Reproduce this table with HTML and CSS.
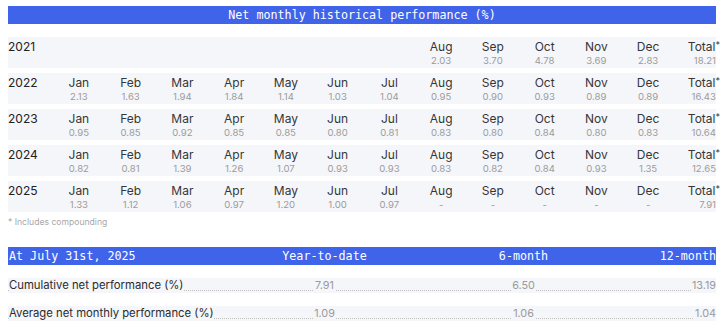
FILE: index.html
```html
<!DOCTYPE html>
<html lang="en">
<head>
<meta charset="utf-8">
<title>Net monthly historical performance</title>
<link rel="stylesheet" href="styles.css">
</head>
<body>
<div class="page">
  <div class="bar bar-title">Net monthly historical performance (%)</div>

  <div class="perf">
    <div class="row">
      <div class="year">2021</div>
      <div class="cell"></div><div class="cell"></div><div class="cell"></div><div class="cell"></div><div class="cell"></div><div class="cell"></div><div class="cell"></div>
      <div class="cell"><span class="m">Aug</span><span class="v">2.03</span></div>
      <div class="cell"><span class="m">Sep</span><span class="v">3.70</span></div>
      <div class="cell"><span class="m">Oct</span><span class="v">4.78</span></div>
      <div class="cell"><span class="m">Nov</span><span class="v">3.69</span></div>
      <div class="cell"><span class="m">Dec</span><span class="v">2.83</span></div>
      <div class="cell total"><span class="m">Total<span class="ast">*</span></span><span class="v">18.21</span></div>
    </div>
    <div class="row">
      <div class="year">2022</div>
      <div class="cell"><span class="m">Jan</span><span class="v">2.13</span></div>
      <div class="cell"><span class="m">Feb</span><span class="v">1.63</span></div>
      <div class="cell"><span class="m">Mar</span><span class="v">1.94</span></div>
      <div class="cell"><span class="m">Apr</span><span class="v">1.84</span></div>
      <div class="cell"><span class="m">May</span><span class="v">1.14</span></div>
      <div class="cell"><span class="m">Jun</span><span class="v">1.03</span></div>
      <div class="cell"><span class="m">Jul</span><span class="v">1.04</span></div>
      <div class="cell"><span class="m">Aug</span><span class="v">0.95</span></div>
      <div class="cell"><span class="m">Sep</span><span class="v">0.90</span></div>
      <div class="cell"><span class="m">Oct</span><span class="v">0.93</span></div>
      <div class="cell"><span class="m">Nov</span><span class="v">0.89</span></div>
      <div class="cell"><span class="m">Dec</span><span class="v">0.89</span></div>
      <div class="cell total"><span class="m">Total<span class="ast">*</span></span><span class="v">16.43</span></div>
    </div>
    <div class="row">
      <div class="year">2023</div>
      <div class="cell"><span class="m">Jan</span><span class="v">0.95</span></div>
      <div class="cell"><span class="m">Feb</span><span class="v">0.85</span></div>
      <div class="cell"><span class="m">Mar</span><span class="v">0.92</span></div>
      <div class="cell"><span class="m">Apr</span><span class="v">0.85</span></div>
      <div class="cell"><span class="m">May</span><span class="v">0.85</span></div>
      <div class="cell"><span class="m">Jun</span><span class="v">0.80</span></div>
      <div class="cell"><span class="m">Jul</span><span class="v">0.81</span></div>
      <div class="cell"><span class="m">Aug</span><span class="v">0.83</span></div>
      <div class="cell"><span class="m">Sep</span><span class="v">0.80</span></div>
      <div class="cell"><span class="m">Oct</span><span class="v">0.84</span></div>
      <div class="cell"><span class="m">Nov</span><span class="v">0.80</span></div>
      <div class="cell"><span class="m">Dec</span><span class="v">0.83</span></div>
      <div class="cell total"><span class="m">Total<span class="ast">*</span></span><span class="v">10.64</span></div>
    </div>
    <div class="row">
      <div class="year">2024</div>
      <div class="cell"><span class="m">Jan</span><span class="v">0.82</span></div>
      <div class="cell"><span class="m">Feb</span><span class="v">0.81</span></div>
      <div class="cell"><span class="m">Mar</span><span class="v">1.39</span></div>
      <div class="cell"><span class="m">Apr</span><span class="v">1.26</span></div>
      <div class="cell"><span class="m">May</span><span class="v">1.07</span></div>
      <div class="cell"><span class="m">Jun</span><span class="v">0.93</span></div>
      <div class="cell"><span class="m">Jul</span><span class="v">0.93</span></div>
      <div class="cell"><span class="m">Aug</span><span class="v">0.83</span></div>
      <div class="cell"><span class="m">Sep</span><span class="v">0.82</span></div>
      <div class="cell"><span class="m">Oct</span><span class="v">0.84</span></div>
      <div class="cell"><span class="m">Nov</span><span class="v">0.93</span></div>
      <div class="cell"><span class="m">Dec</span><span class="v">1.35</span></div>
      <div class="cell total"><span class="m">Total<span class="ast">*</span></span><span class="v">12.65</span></div>
    </div>
    <div class="row">
      <div class="year">2025</div>
      <div class="cell"><span class="m">Jan</span><span class="v">1.33</span></div>
      <div class="cell"><span class="m">Feb</span><span class="v">1.12</span></div>
      <div class="cell"><span class="m">Mar</span><span class="v">1.06</span></div>
      <div class="cell"><span class="m">Apr</span><span class="v">0.97</span></div>
      <div class="cell"><span class="m">May</span><span class="v">1.20</span></div>
      <div class="cell"><span class="m">Jun</span><span class="v">1.00</span></div>
      <div class="cell"><span class="m">Jul</span><span class="v">0.97</span></div>
      <div class="cell"><span class="m">Aug</span><span class="v">-</span></div>
      <div class="cell"><span class="m">Sep</span><span class="v">-</span></div>
      <div class="cell"><span class="m">Oct</span><span class="v">-</span></div>
      <div class="cell"><span class="m">Nov</span><span class="v">-</span></div>
      <div class="cell"><span class="m">Dec</span><span class="v">-</span></div>
      <div class="cell total"><span class="m">Total<span class="ast">*</span></span><span class="v">7.91</span></div>
    </div>
  </div>

  <div class="note">* Includes compounding</div>

  <div class="bar summary-grid">
    <div class="sh-label">At July 31st, 2025</div>
    <div class="sh-mid">Year-to-date</div>
    <div class="sh-mid">6-month</div>
    <div class="sh-end">12-month</div>
  </div>

  <div class="summary">
    <div class="srow summary-grid">
      <div class="s-label"><span class="mask">Cumulative net performance (%)</span></div>
      <div class="s-mid"><span class="mask val">7.91</span></div>
      <div class="s-mid"><span class="mask val">6.50</span></div>
      <div class="s-end"><span class="mask val">13.19</span></div>
    </div>
    <div class="srow summary-grid">
      <div class="s-label"><span class="mask">Average net monthly performance (%)</span></div>
      <div class="s-mid"><span class="mask val">1.09</span></div>
      <div class="s-mid"><span class="mask val">1.06</span></div>
      <div class="s-end"><span class="mask val">1.04</span></div>
    </div>
  </div>
</div>
</body>
</html>
```

FILE: styles.css
```css
* { box-sizing: border-box; }

html, body {
  margin: 0;
  padding: 0;
  background: #ffffff;
}

body {
  font-family: Inter, "Noto Sans", "Liberation Sans", sans-serif;
  color: #2b2b2b;
}

.page {
  width: 726px;
  padding: 6px 10px 0 8px;
}

.bar {
  height: 18px;
  background: #4064e9;
  color: #ffffff;
  font-family: "DejaVu Sans Mono", "Liberation Mono", monospace;
  font-size: 11.7px;
  line-height: 18px;
  white-space: nowrap;
}

.bar-title {
  text-align: center;
}

.perf {
  margin-top: 13px;
  display: flex;
  flex-direction: column;
  gap: 5px;
}

.row {
  display: grid;
  grid-template-columns: 45px repeat(12, 1fr) 42px;
  height: 31px;
  padding-top: 2px;
  background: #f5f6fa;
}

.year {
  font-size: 12px;
  line-height: 15px;
  color: #222222;
}

.cell {
  display: flex;
  flex-direction: column;
  align-items: center;
}

.cell.total {
  align-items: flex-end;
}

.m {
  font-size: 12px;
  line-height: 15px;
  color: #363636;
  white-space: nowrap;
}

.v {
  font-size: 9.6px;
  line-height: 13px;
  color: #9c9c9c;
}

.ast {
  font-size: 9px;
  vertical-align: 3px;
  margin-right: -4px;
  line-height: 0;
}

.note {
  margin-top: 4px;
  height: 13px;
  font-size: 8.6px;
  line-height: 13px;
  color: #a8a8a8;
}

.summary-grid {
  display: grid;
  grid-template-columns: 217px 199px 199px 1fr;
}

.bar.summary-grid {
  margin-top: 18px;
}

.sh-label {
  padding-left: 1px;
}

.sh-mid {
  text-align: center;
}

.sh-end {
  text-align: right;
}

.summary {
  margin-top: 13px;
  display: flex;
  flex-direction: column;
  gap: 13px;
}

.srow {
  height: 15px;
  background-color: #f5f6fa;
  background-image: repeating-linear-gradient(to right, #c2c2c2 0 1px, transparent 1px 2px);
  background-size: 100% 1px;
  background-position: 0 12px;
  background-repeat: no-repeat;
  font-size: 11.3px;
  line-height: 15px;
  white-space: nowrap;
}

.mask {
  background: #f5f6fa;
  display: inline-block;
}

.s-label {
  color: #2b2b2b;
  padding-left: 1px;
}

.s-mid {
  text-align: center;
}

.s-end {
  text-align: right;
}

.val {
  color: #9a9a9a;
  font-size: 10.8px;
  padding: 0 1px;
}

.s-end .val {
  padding-right: 0;
}
```
